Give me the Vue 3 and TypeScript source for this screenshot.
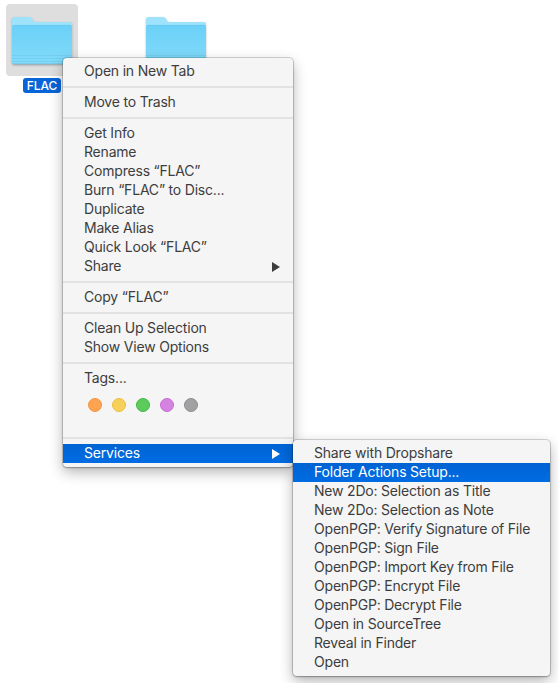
<script setup lang="ts">
interface MenuItem {
  label: string
  submenu?: boolean
  active?: boolean
}

const groups: MenuItem[][] = [
  [{ label: 'Open in New Tab' }],
  [{ label: 'Move to Trash' }],
  [
    { label: 'Get Info' },
    { label: 'Rename' },
    { label: 'Compress “FLAC”' },
    { label: 'Burn “FLAC” to Disc...' },
    { label: 'Duplicate' },
    { label: 'Make Alias' },
    { label: 'Quick Look “FLAC”' },
    { label: 'Share', submenu: true },
  ],
  [{ label: 'Copy “FLAC”' }],
  [{ label: 'Clean Up Selection' }, { label: 'Show View Options' }],
  [{ label: 'Tags...' }],
  [{ label: 'Services', submenu: true, active: true }],
]

const tags: string[] = ['orange', 'yellow', 'green', 'purple', 'gray']

const services: MenuItem[] = [
  { label: 'Share with Dropshare' },
  { label: 'Folder Actions Setup...', active: true },
  { label: 'New 2Do: Selection as Title' },
  { label: 'New 2Do: Selection as Note' },
  { label: 'OpenPGP: Verify Signature of File' },
  { label: 'OpenPGP: Sign File' },
  { label: 'OpenPGP: Import Key from File' },
  { label: 'OpenPGP: Encrypt File' },
  { label: 'OpenPGP: Decrypt File' },
  { label: 'Open in SourceTree' },
  { label: 'Reveal in Finder' },
  { label: 'Open' },
]

const folders = [
  { name: 'FLAC', selected: true },
  { name: '', selected: false },
]
</script>

<template>
  <main class="desktop">
    <div class="files">
      <div v-for="(folder, i) in folders" :key="i" class="file" :class="{ selected: folder.selected }">
        <div class="thumb">
          <svg class="folder" width="64" height="52" viewBox="0 0 64 52">
            <defs>
              <linearGradient :id="`front${i}`" x1="0" y1="0" x2="0" y2="1">
                <stop offset="0" stop-color="#6bd0f7" />
                <stop offset="1" stop-color="#82dbfa" />
              </linearGradient>
            </defs>
            <path
              d="M2 4.500Q2 2 4.500 2H19Q21 2 22 3.800L23.200 6Q23.900 7 25.500 7H60Q62 7 62 9V46.500Q62 49 59.500 49H4.500Q2 49 2 46.500Z"
              fill="#9fe2fb"
            />
            <path d="M2 12Q2 10 4 10H60Q62 10 62 12V46.500Q62 49 59.500 49H4.500Q2 49 2 46.500Z" :fill="`url(#front${i})`" />
            <path d="M3 10.400H61" stroke="#63c9f1" stroke-width=".8" />
            <path d="M2 40.500H62M2 43.500H62M2 46.500H62" stroke="#68c5e8" stroke-width=".8" opacity=".6" />
            <path d="M2.300 48.200Q3 49 4.500 49H59.500Q61 49 61.700 48.200" fill="none" stroke="#65acc8" stroke-width=".6" />
          </svg>
        </div>
        <span v-if="folder.name" class="name">{{ folder.name }}</span>
      </div>
    </div>

    <nav class="menu context">
      <template v-for="(group, g) in groups" :key="g">
        <div v-if="g > 0" class="separator"></div>
        <div v-for="item in group" :key="item.label" class="item" :class="{ active: item.active }">
          <span>{{ item.label }}</span>
          <svg v-if="item.submenu" class="arrow" width="8" height="10" viewBox="0 0 8 10">
            <path d="M0 0L8 5L0 10Z" fill="currentColor" />
          </svg>
        </div>
        <div v-if="g === 5" class="tags">
          <i v-for="tag in tags" :key="tag" class="tag" :class="tag"></i>
        </div>
      </template>
    </nav>

    <nav class="menu services">
      <div v-for="item in services" :key="item.label" class="item" :class="{ active: item.active }">
        <span>{{ item.label }}</span>
      </div>
    </nav>
  </main>
</template>

<style>
body {
  background: #fff;
  overflow: hidden;
}
</style>

<style scoped>
.desktop {
  position: relative;
  width: 558px;
  height: 683px;
  overflow: hidden;
  background: #fff;
  color: #3d3d3d;
  font: 14px/19px Inter, 'Liberation Sans', sans-serif;
}
.files {
  display: flex;
  gap: 62px;
  padding: 4px 6px;
}
.file {
  display: flex;
  flex-direction: column;
  align-items: center;
  width: 72px;
}
.thumb {
  box-sizing: border-box;
  width: 72px;
  height: 72px;
  padding: 11px 4px;
  border-radius: 4px;
}
.selected .thumb {
  background: #dedede;
}
.folder {
  display: block;
  filter: drop-shadow(0 1px 1px rgba(0, 0, 0, 0.25));
}
.name {
  margin-top: 2px;
  padding: 0 4px;
  border-radius: 3px;
  background: #0865d8;
  color: #fff;
  font-size: 12px;
  font-weight: 500;
  line-height: 15px;
}
.menu {
  position: absolute;
  box-sizing: border-box;
  padding: 4px 0;
  border-radius: 4px;
  background: #f5f5f5;
  letter-spacing: -0.2px;
  box-shadow: 0 0 0 1px rgba(0, 0, 0, 0.15), 0 1px 2px rgba(0, 0, 0, 0.22), 0 5px 14px rgba(0, 0, 0, 0.3);
}
.context {
  left: 63px;
  top: 58px;
  width: 230px;
}
.services {
  left: 293px;
  top: 440px;
  width: 257px;
}
.item {
  display: flex;
  align-items: center;
  justify-content: space-between;
  height: 19px;
  padding: 0 13px 0 21px;
  white-space: nowrap;
}
.item span {
  padding-bottom: 2px;
}
.item.active {
  background: linear-gradient(#0063d3, #006ce3);
  color: #fff;
}
.separator {
  height: 2px;
  margin: 5px 0;
  background: #e2e2e2;
}
.tags {
  display: flex;
  gap: 10px;
  box-sizing: border-box;
  height: 44px;
  padding: 10px 0 0 25px;
}
.tag {
  box-sizing: border-box;
  width: 14px;
  height: 14px;
  border: 1px solid;
  border-radius: 50%;
}
.orange {
  background: #fea350;
  border-color: #f79340;
}
.yellow {
  background: #f7cf5b;
  border-color: #eec03a;
}
.green {
  background: #5ccb5b;
  border-color: #3eb940;
}
.purple {
  background: #d583e0;
  border-color: #c56cd3;
}
.gray {
  background: #a1a1a4;
  border-color: #8d8d90;
}
</style>
